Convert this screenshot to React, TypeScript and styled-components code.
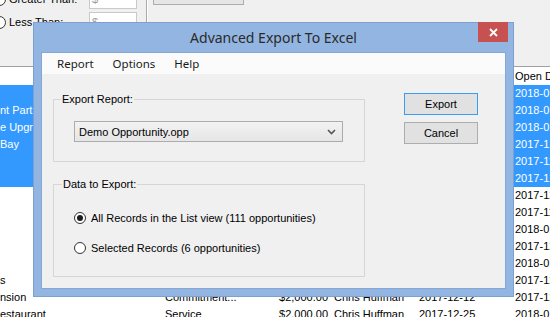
import React from "react";
import styled, { createGlobalStyle } from "styled-components";

const GlobalStyle = createGlobalStyle`
  html, body { margin: 0; padding: 0; }
  body {
    width: 550px;
    height: 317px;
    overflow: hidden;
    background: #ffffff;
    font-family: "Liberation Sans", Arial, sans-serif;
    font-size: 11px;
    color: #000000;
  }
  * { box-sizing: border-box; }
`;

const Screen = styled.div`
  position: relative;
  width: 550px;
  height: 317px;
  overflow: hidden;
  display: flex;
  flex-direction: column;
  background: #ffffff;
`;

/* ---------- background application ---------- */

const FilterPanel = styled.div`
  flex: none;
  height: 67px;
  background: #f0f0f0;
  border-bottom: 1px solid #a0a0a0;
  display: flex;
  align-items: flex-start;
  overflow: hidden;
`;

const FilterRows = styled.div`
  display: grid;
  grid-template-columns: 96px 48px;
  row-gap: 3px;
  align-items: center;
  margin: -11px 0 0 -7px;
`;

const FilterOption = styled.label`
  display: flex;
  align-items: center;
  gap: 3px;
  height: 20px;
  white-space: nowrap;
  font-size: 11px;
`;

const RadioCircle = styled.span<{ $size: number }>`
  flex: none;
  width: ${(p) => p.$size}px;
  height: ${(p) => p.$size}px;
  border-radius: 50%;
  border: 1px solid #333333;
  background: #ffffff;
  display: inline-flex;
  align-items: center;
  justify-content: center;
`;

const RadioDot = styled.span`
  width: 6px;
  height: 6px;
  border-radius: 50%;
  background: #1c1c1c;
`;

const MoneyBox = styled.div`
  height: 20px;
  border: 1px solid #c9c9c9;
  background: #ffffff;
  color: #9a9a9a;
  padding-left: 2px;
  line-height: 18px;
`;

const VSeparator = styled.div`
  align-self: stretch;
  width: 1px;
  margin-left: 9px;
  background: #a9a9a9;
  box-shadow: 1px 0 0 #ffffff;
`;

const PanelButton = styled.div`
  width: 91px;
  height: 23px;
  margin: -18px 0 0 6px;
  border: 1px solid #adadad;
  background: #e5e5e5;
`;

const List = styled.div`
  flex: 1;
  display: flex;
  flex-direction: column;
  overflow: hidden;
`;

const Row = styled.div<{ $selected?: boolean; $header?: boolean }>`
  flex: none;
  display: grid;
  grid-template-columns: 163px 112px 56px 86px 96px 1fr;
  height: ${(p) => (p.$header ? 18 : 17)}px;
  line-height: ${(p) => (p.$header ? 18 : 17)}px;
  white-space: nowrap;
  background: ${(p) => (p.$selected ? "#3399ff" : "transparent")};
  color: ${(p) => (p.$selected ? "#ffffff" : "#000000")};
`;

const Cell = styled.div<{ $align?: "left" | "right"; $pad?: string }>`
  overflow: hidden;
  text-align: ${(p) => p.$align ?? "left"};
  padding: ${(p) => p.$pad ?? "0 0 0 2px"};
`;

/* ---------- dialog ---------- */

const Dialog = styled.div`
  position: absolute;
  left: 33px;
  top: 22px;
  width: 481px;
  height: 275px;
  background: #93b5e1;
  border: 1px solid #7d9fd1;
  padding: 0 7px 7px;
  display: flex;
  flex-direction: column;
`;

const TitleBar = styled.div`
  flex: none;
  height: 29px;
  margin: 0 -7px;
  display: grid;
  grid-template-columns: 1fr auto 1fr;
  align-items: center;
`;

const Title = styled.div`
  grid-column: 2;
  font-family: "Noto Sans", "Open Sans", sans-serif;
  font-size: 14px;
  color: #2a2a2a;
  white-space: nowrap;
`;

const CloseButton = styled.div`
  grid-column: 3;
  justify-self: end;
  align-self: start;
  width: 30px;
  height: 20px;
  margin: -1px 5px 0 0;
  background: #c75050;
  display: flex;
  align-items: center;
  justify-content: center;
`;

const Client = styled.div`
  flex: 1;
  background: #f0f0f0;
  border: 1px solid #86a6d6;
  display: flex;
  flex-direction: column;
`;

const MenuBar = styled.div`
  flex: none;
  height: 21px;
  background: #fbfbfb;
  display: flex;
  align-items: center;
  padding-left: 5px;
`;

const MenuItem = styled.div`
  padding: 0 9px 0 10px;
  font-family: "Noto Sans", "Open Sans", sans-serif;
  font-size: 11.5px;
  color: #1a1a1a;
`;

const Body = styled.div`
  flex: 1;
  display: flex;
  align-items: flex-start;
  gap: 39px;
  padding: 19px 0 0 11px;
`;

const Groups = styled.div`
  display: flex;
  flex-direction: column;
  gap: 16px;
`;

const Group = styled.fieldset<{ $pad: string }>`
  margin: 0;
  width: 312px;
  border: 1px solid #d6d6d6;
  padding: ${(p) => p.$pad};
  min-width: 0;
`;

const Legend = styled.legend<{ $offset: number }>`
  margin-left: ${(p) => p.$offset}px;
  padding: 0 1px;
  line-height: 13px;
  font-size: 11px;
`;

const Combo = styled.div`
  height: 21px;
  border: 1px solid #acacac;
  background: linear-gradient(#f2f2f2, #e6e6e6);
  display: flex;
  align-items: center;
  justify-content: space-between;
  padding: 0 6px 0 4px;
`;

const RadioList = styled.div`
  display: flex;
  flex-direction: column;
  gap: 13px;
`;

const RadioRow = styled.label`
  display: flex;
  align-items: center;
  gap: 5px;
  height: 17px;
  white-space: nowrap;
`;

const ButtonColumn = styled.div`
  display: flex;
  flex-direction: column;
  gap: 7px;
`;

const Button = styled.div<{ $default?: boolean }>`
  width: 74px;
  height: 22px;
  border: 1px solid ${(p) => (p.$default ? "#3c9cf0" : "#adadad")};
  background: #e1e1e1;
  display: flex;
  align-items: center;
  justify-content: center;
  font-size: 11px;
`;

type Rec = {
  name: string;
  type: string;
  amount: string;
  owner: string;
  close: string;
  open: string;
  sel?: boolean;
};

const records: Rec[] = [
  { name: "", type: "Service", amount: "$4,500.00", owner: "Chris Huffman", close: "2018-02-15", open: "2018-01-08", sel: true },
  { name: "nt Partners", type: "New Business", amount: "$8,250.00", owner: "Chris Huffman", close: "2018-02-28", open: "2018-01-11", sel: true },
  { name: "e Upgrade", type: "Upgrade", amount: "$3,100.00", owner: "Chris Huffman", close: "2018-01-31", open: "2018-01-03", sel: true },
  { name: "Bay", type: "New Business", amount: "$6,000.00", owner: "Chris Huffman", close: "2018-01-19", open: "2017-12-20", sel: true },
  { name: "", type: "Service", amount: "$1,200.00", owner: "Chris Huffman", close: "2018-01-12", open: "2017-11-28", sel: true },
  { name: "", type: "Renewal", amount: "$2,400.00", owner: "Chris Huffman", close: "2018-01-05", open: "2017-12-14", sel: true },
  { name: "", type: "Service", amount: "$1,800.00", owner: "Chris Huffman", close: "2017-12-29", open: "2017-12-01" },
  { name: "", type: "Renewal", amount: "$5,000.00", owner: "Chris Huffman", close: "2018-01-22", open: "2017-11-15" },
  { name: "", type: "New Business", amount: "$7,500.00", owner: "Chris Huffman", close: "2018-02-09", open: "2018-01-04" },
  { name: "", type: "Service", amount: "$900.00", owner: "Chris Huffman", close: "2017-12-20", open: "2017-12-06" },
  { name: "", type: "Upgrade", amount: "$3,750.00", owner: "Chris Huffman", close: "2018-02-02", open: "2018-01-09" },
  { name: "s", type: "Service", amount: "$1,500.00", owner: "Chris Huffman", close: "2017-12-18", open: "2017-12-11" },
  { name: "nsion", type: "Commitment...", amount: "$2,000.00", owner: "Chris Huffman", close: "2017-12-12", open: "2017-12-04" },
  { name: "estaurant", type: "Service", amount: "$2,000.00", owner: "Chris Huffman", close: "2017-12-25", open: "2018-01-02" },
];

const Chevron = () => (
  <svg width="9" height="6" viewBox="0 0 9 6">
    <path d="M1 1 L4.5 4.5 L8 1" fill="none" stroke="#555" strokeWidth="1.6" />
  </svg>
);

const CloseIcon = () => (
  <svg width="9" height="9" viewBox="0 0 9 9">
    <path d="M1 1 L8 8 M8 1 L1 8" stroke="#ffffff" strokeWidth="1.8" />
  </svg>
);

export default function App() {
  return (
    <Screen>
      <GlobalStyle />
      <FilterPanel>
        <FilterRows>
          <FilterOption>
            <RadioCircle $size={13} />
            Greater Than:
          </FilterOption>
          <MoneyBox>$</MoneyBox>
          <FilterOption>
            <RadioCircle $size={13} />
            Less Than:
          </FilterOption>
          <MoneyBox>$</MoneyBox>
        </FilterRows>
        <VSeparator />
        <PanelButton />
      </FilterPanel>
      <List>
        <Row $header>
          <Cell $pad="0" />
          <Cell>Type</Cell>
          <Cell $align="right" $pad="0 3px 0 0">Amount</Cell>
          <Cell $pad="0 0 0 3px">Owner</Cell>
          <Cell>Close Date</Cell>
          <Cell>Open Date</Cell>
        </Row>
        {records.map((r, i) => (
          <Row key={i} $selected={r.sel}>
            <Cell $pad="0">{r.name}</Cell>
            <Cell>{r.type}</Cell>
            <Cell $align="right" $pad="0 3px 0 0">{r.amount}</Cell>
            <Cell $pad="0 0 0 3px">{r.owner}</Cell>
            <Cell>{r.close}</Cell>
            <Cell>{r.open}</Cell>
          </Row>
        ))}
      </List>

      <Dialog>
        <TitleBar>
          <Title>Advanced Export To Excel</Title>
          <CloseButton>
            <CloseIcon />
          </CloseButton>
        </TitleBar>
        <Client>
          <MenuBar>
            <MenuItem>Report</MenuItem>
            <MenuItem>Options</MenuItem>
            <MenuItem>Help</MenuItem>
          </MenuBar>
          <Body>
            <Groups>
              <Group $pad="15px 21px 19px 20px">
                <Legend $offset={-13}>Export Report:</Legend>
                <Combo>
                  <span>Demo Opportunity.opp</span>
                  <Chevron />
                </Combo>
              </Group>
              <Group $pad="18px 20px 20px 20px">
                <Legend $offset={-12}>Data to Export:</Legend>
                <RadioList>
                  <RadioRow>
                    <RadioCircle $size={12}>
                      <RadioDot />
                    </RadioCircle>
                    All Records in the List view (111 opportunities)
                  </RadioRow>
                  <RadioRow>
                    <RadioCircle $size={12} />
                    Selected Records (6 opportunities)
                  </RadioRow>
                </RadioList>
              </Group>
            </Groups>
            <ButtonColumn>
              <Button $default>Export</Button>
              <Button>Cancel</Button>
            </ButtonColumn>
          </Body>
        </Client>
      </Dialog>
    </Screen>
  );
}
